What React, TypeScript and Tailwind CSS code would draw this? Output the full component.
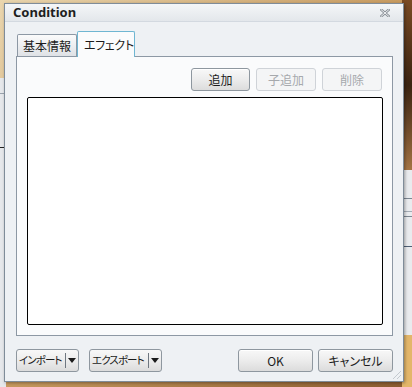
const jp = { fontFamily: '"Noto Sans CJK JP", "Noto Sans", sans-serif', fontFeatureSettings: '"palt"' }

function Btn({ label, disabled, w }: { label: string; disabled?: boolean; w: string }) {
  return (
    <button
      className={`${w} h-[23px] rounded-[3px] border text-[12px] leading-none whitespace-nowrap flex items-center justify-center ${
        disabled
          ? 'border-[#cfd3d8] bg-[#f4f5f6] text-[#a6a9ad]'
          : 'border-[#8e979f] bg-gradient-to-b from-[#f8f8f8] via-[#ececec] to-[#dcdcdc] text-[#1b1b1b] shadow-[inset_0_1px_0_#ffffff]'
      }`}
      style={jp}
    >
      {label}
    </button>
  )
}

function SplitBtn({ label, w }: { label: string; w: string }) {
  return (
    <button
      className={`${w} h-[23px] rounded-[3px] border border-[#8e979f] bg-gradient-to-b from-[#f8f8f8] via-[#ececec] to-[#dcdcdc] leading-none whitespace-nowrap flex items-center text-[#1b1b1b]`}
      style={jp}
    >
      <span className="flex-1 text-left pl-[2px] text-[10.5px] tracking-[-0.9px]">{label}</span>
      <span className="shrink-0 w-px h-[15px] bg-[#6f7780]" />
      <span className="shrink-0 w-[12px] flex items-center justify-center">
        <span className="w-0 h-0 border-l-[4px] border-r-[4px] border-t-[5px] border-l-transparent border-r-transparent border-t-[#1b1b1b]" />
      </span>
    </button>
  )
}

export default function App() {
  return (
    <div className="relative w-[412px] h-[387px] overflow-hidden bg-[#d9b77e]">
      {/* desktop behind the dialog */}
      <div className="absolute inset-0 bg-gradient-to-br from-[#ead6ae] via-[#c79a5f] to-[#8a5a2e]" />
      <div className="absolute right-0 top-0 w-[10px] h-[170px] bg-gradient-to-b from-[#7a4b24] via-[#3b2412] to-[#a47444]" />
      <div className="absolute right-0 top-[170px] w-[10px] h-[165px] bg-[#e9ebee] flex flex-col">
        <div className="h-[29px] border-b border-[#7d8792]" />
        <div className="h-[13px] border-b border-[#a5adb6]" />
        <div className="h-[5px] border-b border-[#7d8792]" />
        <div className="h-[30px] border-b border-[#4f6075]" />
      </div>
      <div className="absolute right-0 top-[335px] w-[10px] h-[52px] bg-[#e3b66a]" />
      <div className="absolute left-0 top-[78px] w-[6px] h-[309px] bg-[#e6e8eb] flex flex-col">
        <div className="h-[16px] border-b border-[#9aa3ad]" />
        <div className="h-[54px] border-b border-[#222]" />
      </div>

      {/* dialog window */}
      <div className="absolute left-[4px] top-[3px] w-[400px] h-[379px] flex flex-col border border-[#7f8c99] bg-[#eef1f4] shadow-[1px_1px_3px_rgba(0,0,0,0.35)]">
        <div className="h-[18px] flex items-center justify-between pl-[8px] pr-[13px] bg-gradient-to-b from-[#f4f6f8] to-[#e3e7eb] border-b border-[#d3d9e0]">
          <span className="text-[13px] font-bold text-[#1e1e1e]" style={{ fontFamily: '"Noto Sans", "Liberation Sans", sans-serif' }}>
            Condition
          </span>
          <svg width="10" height="8" viewBox="0 0 10 8" className="mt-[1px]">
            <path d="M1 0.5 L9 7.5 M9 0.5 L1 7.5" stroke="#8a9097" strokeWidth="2.6" strokeLinecap="square" />
            <path d="M1 0.5 L9 7.5 M9 0.5 L1 7.5" stroke="#eef0f2" strokeWidth="1" strokeLinecap="square" />
          </svg>
        </div>

        <div className="flex-1 flex flex-col pt-[9px] pl-[11px] pr-[10px] pb-[10px]">
          <div className="flex items-end h-[25px] pl-[1px]" style={jp}>
            <div className="w-[60px] h-[22px] border border-b-0 border-[#8d98a4] rounded-t-[2px] bg-gradient-to-b from-[#fbfbfb] to-[#dfe2e6] text-[12px] text-[#1b1b1b] whitespace-nowrap flex items-center justify-center">
              基本情報
            </div>
            <div className="relative z-10 -mb-px w-[58px] h-[26px] border border-b-0 border-[#6fb6d2] rounded-t-[2px] bg-[#fafbfc] text-[12px] text-[#1b1b1b] whitespace-nowrap tracking-[-0.3px] flex items-start pt-[4px] pl-[6px]">
              エフェクト
            </div>
          </div>

          <div className="h-[280px] border border-[#8d98a4] bg-[#fafbfc] flex flex-col pt-[11px] pl-[10px] pr-[9px] pb-[10px]">
            <div className="flex justify-end gap-[6px] pr-[1px]">
              <Btn label="追加" w="w-[59px]" />
              <Btn label="子追加" w="w-[60px]" disabled />
              <Btn label="削除" w="w-[60px]" disabled />
            </div>
            <div className="mt-[6px] flex-1 border border-black rounded-[2px] bg-white" />
          </div>

          <div className="mt-[13px] flex items-center">
            <SplitBtn label="インポート" w="w-[63px]" />
            <div className="ml-[10px]">
              <SplitBtn label="エクスポート" w="w-[73px]" />
            </div>
            <div className="ml-auto flex gap-[5px]">
              <Btn label="OK" w="w-[75px]" />
              <Btn label="キャンセル" w="w-[75px]" />
            </div>
          </div>
        </div>
        <svg width="11" height="11" viewBox="0 0 11 11" className="absolute right-[1px] bottom-[1px]">
          <path d="M10 2 L2 10 M10 6 L6 10" stroke="#c3c9cf" strokeWidth="1" />
        </svg>
      </div>
    </div>
  )
}
